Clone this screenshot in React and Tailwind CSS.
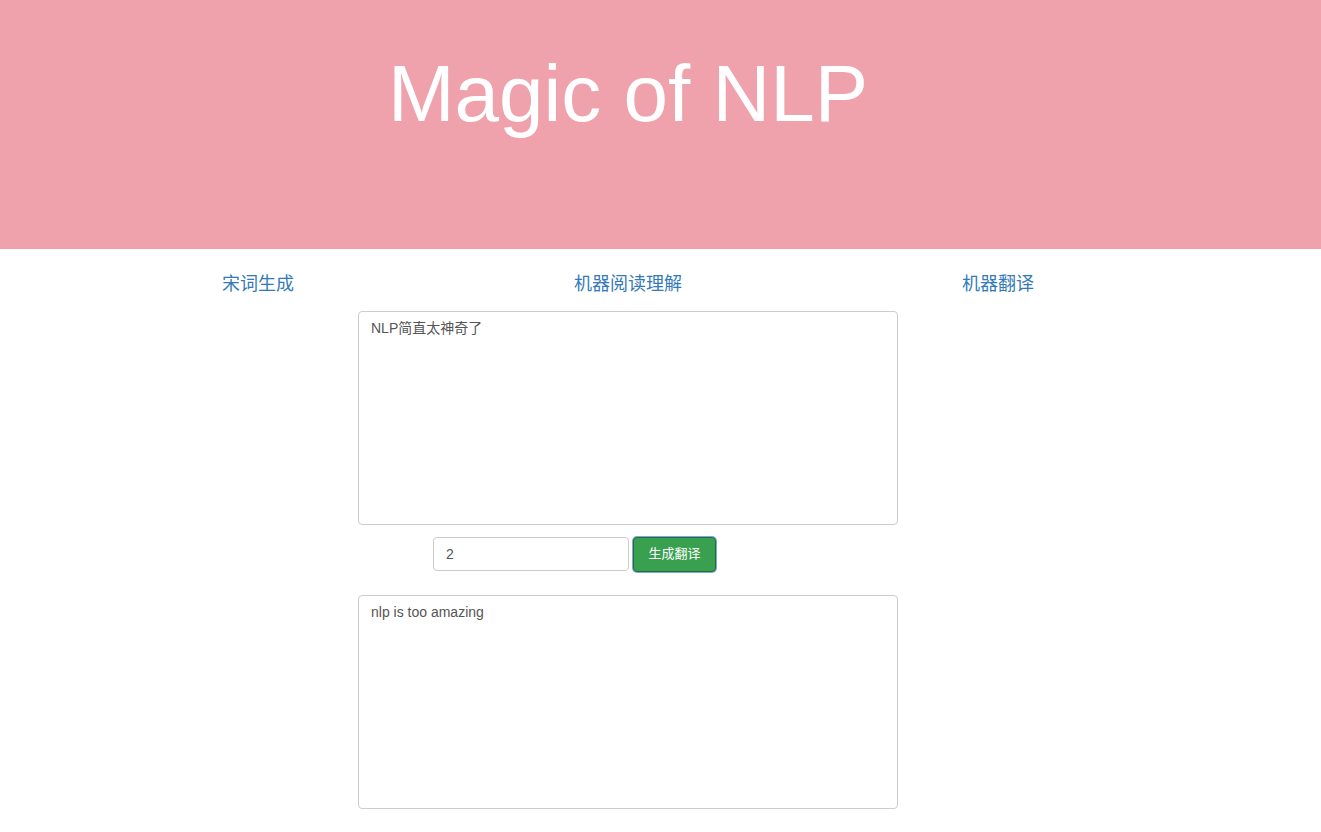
export default function App() {
  const font = { fontFamily: '"Liberation Sans", Arial, "Noto Sans CJK SC", sans-serif' };
  return (
    <div className="min-h-[832px] bg-white text-[14px] text-[#333]" style={font}>
      <header className="h-[249px] bg-[#efa2ab] pt-[50px]">
        <div className="w-[1256px] text-center">
          <h1 className="text-[80px] leading-[88px] text-white font-normal">Magic of NLP</h1>
        </div>
      </header>
      <div className="w-[1256px] flex flex-col items-center">
        <nav className="mt-[23px] w-[1110px] grid grid-cols-3 text-center text-[18px] leading-[24px] text-[#337ab7]">
          <a href="#">宋词生成</a>
          <a href="#">机器阅读理解</a>
          <a href="#">机器翻译</a>
        </nav>
        <textarea
          readOnly
          value="NLP简直太神奇了"
          className="mt-[15px] w-[540px] h-[214px] resize-none border border-[#ccc] rounded-[4px] px-[12px] py-[6px] text-[14px] leading-[20px] text-[#555] outline-none"
          style={font}
        />
        <div className="mt-[11px] w-[540px] h-[36px] flex items-center pl-[75px]">
          <input
            readOnly
            value="2"
            className="w-[196px] h-[34px] border border-[#ccc] rounded-[4px] px-[12px] text-[14px] text-[#555] outline-none"
            style={font}
          />
          <button
            className="ml-[4px] w-[83px] h-[35px] rounded-[4px] bg-[#39a04f] border border-[#2d6b34] text-white text-[13px] ring-1 ring-[#7fa4e8]"
            style={font}
          >
            生成翻译
          </button>
        </div>
        <textarea
          readOnly
          value="nlp is too amazing"
          className="mt-[23px] w-[540px] h-[214px] resize-none border border-[#ccc] rounded-[4px] px-[12px] py-[6px] text-[14px] leading-[20px] text-[#555] outline-none"
          style={font}
        />
      </div>
    </div>
  );
}
